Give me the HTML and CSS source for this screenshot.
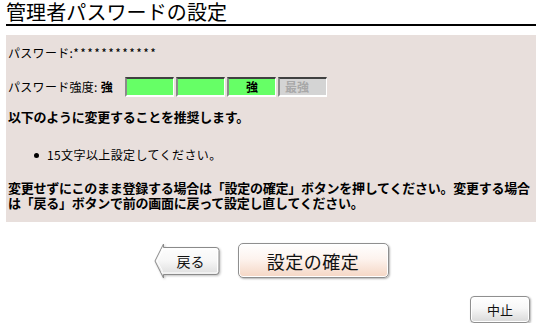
FILE: index.html
```html
<!DOCTYPE html>
<html lang="ja">
<head>
<meta charset="utf-8">
<title>管理者パスワードの設定</title>
<link rel="stylesheet" href="styles.css">
</head>
<body>
<div class="page">
  <h1 class="title">管理者パスワードの設定</h1>
  <div class="panel">
    <p class="row">パスワード:<span class="mask">************</span></p>
    <div class="strength">
      <span class="label">パスワード強度: <b>強</b></span>
      <div class="meter">
        <span class="seg on"></span>
        <span class="seg on"></span>
        <span class="seg on">強</span>
        <span class="seg off">最強</span>
      </div>
    </div>
    <p class="advice">以下のように変更することを推奨します。</p>
    <ul class="tips">
      <li>15文字以上設定してください。</li>
    </ul>
    <p class="note">変更せずにこのまま登録する場合は「設定の確定」ボタンを押してください。変更する場合<br>は「戻る」ボタンで前の画面に戻って設定し直してください。</p>
  </div>
  <div class="actions">
    <button class="back" type="button">
      <svg class="back-shape" width="66" height="36" viewBox="0 0 66 36" aria-hidden="true">
        <defs>
          <linearGradient id="bg" x1="0" y1="0" x2="0" y2="1">
            <stop offset="0" stop-color="#ffffff"/>
            <stop offset="0.5" stop-color="#f6f6f6"/>
            <stop offset="1" stop-color="#d8d8d8"/>
          </linearGradient>
        </defs>
        <path d="M1 18 L9.5 1 V4.5 H62 Q65 4.5 65 7.5 V28.5 Q65 31.5 62 31.5 H9.5 V35 Z" fill="url(#bg)" stroke="#8a8a8a" stroke-width="1"/>
        <path d="M3 18 L8 9 V6 H62 Q63.5 6 63.5 7.5 V28.5 Q63.5 30 62 30 H8 V27 Z" fill="none" stroke="#ffffff" stroke-width="1"/>
      </svg>
      <span class="back-label">戻る</span>
    </button>
    <button class="confirm" type="button">設定の確定</button>
  </div>
  <div class="footer">
    <button class="cancel" type="button">中止</button>
  </div>
</div>
</body>
</html>
```

FILE: styles.css
```css
html, body {
  margin: 0;
  padding: 0;
  background: #ffffff;
}

body {
  font-family: "Noto Sans CJK JP", "Noto Sans", sans-serif;
  color: #000;
}

.page {
  width: 530px;
  padding: 0 6px;
}

.title {
  margin: 0 0 9px 0;
  font-size: 20px;
  font-weight: normal;
  line-height: 24px;
  border-bottom: 2px solid #000;
  letter-spacing: 0.1px;
}

.panel {
  background: #e8dfdc;
  padding: 11px 0 12px 2px;
  height: 164px;
}

.row {
  margin: 0;
  font-size: 12px;
  line-height: 14px;
  letter-spacing: 0.3px;
}

.mask {
  letter-spacing: 1.4px;
}

.strength {
  display: flex;
  align-items: center;
  margin-top: 17px;
  height: 20px;
}

.label {
  font-size: 12px;
  line-height: 14px;
  width: 117px;
  letter-spacing: 0.3px;
}

.label b {
  font-weight: bold;
}

.meter {
  display: flex;
  gap: 2px;
}

.seg {
  box-sizing: border-box;
  width: 49px;
  height: 20px;
  border-top: 2px solid #404040;
  border-left: 2px solid #8a8a8a;
  border-right: 1px solid #ffffff;
  border-bottom: 2px solid #ffffff;
  font-size: 12px;
  font-weight: bold;
  line-height: 16px;
  text-align: center;
}

.seg.on {
  background: #66ff66;
  color: #000;
}

.seg.off {
  background: #d4d4d4;
  color: #a8a8a8;
  text-align: left;
  padding-left: 5px;
}

.advice {
  margin: 13px 0 0 0;
  font-size: 13px;
  font-weight: bold;
  line-height: 14px;
  letter-spacing: -0.25px;
}

.tips {
  list-style: none;
  margin: 24px 0 0 0;
  padding: 0;
}

.tips li {
  display: flex;
  align-items: center;
  gap: 8px;
  font-size: 12px;
  line-height: 14px;
  letter-spacing: 0.4px;
}

.tips li::before {
  content: "";
  width: 5px;
  height: 5px;
  border-radius: 50%;
  background: #000;
  margin-left: 26px;
}

.note {
  margin: 18px 0 0 0;
  font-size: 13px;
  font-weight: bold;
  line-height: 15px;
  letter-spacing: -0.25px;
  white-space: nowrap;
}

.actions {
  display: flex;
  justify-content: center;
  align-items: center;
  gap: 18px;
  margin-top: 20px;
  height: 37px;
}

.back {
  position: relative;
  width: 66px;
  height: 36px;
  padding: 0 0 0 8px;
  border: 0;
  background: transparent;
  font-family: inherit;
  font-size: 14px;
  color: #111;
  cursor: pointer;
  display: flex;
  align-items: center;
  justify-content: center;
}

.back-shape {
  position: absolute;
  left: 0;
  top: 0;
  filter: drop-shadow(1px 1px 1px rgba(0, 0, 0, 0.25));
}

.back-label {
  position: relative;
  line-height: 16px;
}

.confirm {
  width: 151px;
  height: 35px;
  border: 1px solid #8f8f8f;
  border-radius: 5px;
  background: linear-gradient(#ffffff 0%, #fdf3ee 45%, #f5d6c4 100%);
  box-shadow: inset 0 0 0 1px #ffffff, 1px 1px 2px rgba(0, 0, 0, 0.3);
  font-family: inherit;
  font-size: 18px;
  color: #111;
  letter-spacing: 0.5px;
  padding: 0;
  cursor: pointer;
}

.footer {
  display: flex;
  justify-content: flex-end;
  margin-top: 17px;
  padding-right: 6px;
}

.cancel {
  width: 60px;
  height: 27px;
  border: 1px solid #8f8f8f;
  border-radius: 4px;
  background: linear-gradient(#ffffff 0%, #f7f7f7 45%, #d9d9d9 100%);
  box-shadow: inset 0 0 0 1px #ffffff, 1px 1px 2px rgba(0, 0, 0, 0.3);
  font-family: inherit;
  font-size: 13px;
  color: #111;
  padding: 0;
  cursor: pointer;
}
```
